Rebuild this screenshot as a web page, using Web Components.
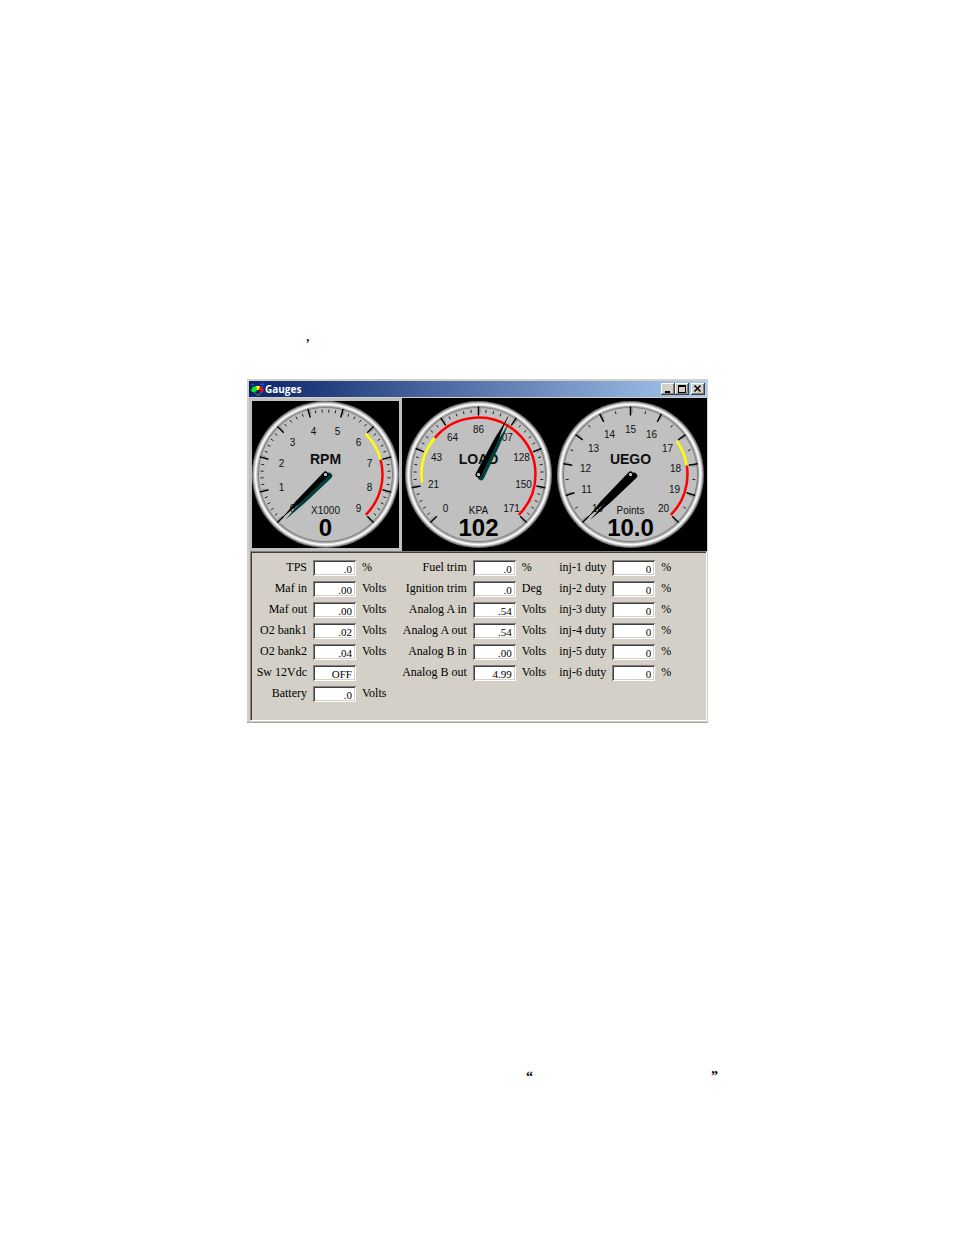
<!DOCTYPE html>
<html lang="en">
<head>
<meta charset="utf-8">
<title>Gauges</title>
<style>
  body { margin: 0; background: #fff; color: #000; font-family: "Liberation Serif", "Times New Roman", serif; }
</style>
</head>
<body>
<manual-page>
  <span slot="before">’</span>
  <app-window caption="Gauges">
    <gauge-strip slot="gauges">
      <dial-gauge framed caption="RPM" unit="X1000" value="0" labels="0,1,2,3,4,5,6,7,8,9" minors="4" yellow="45,75" red="75,135" needle="-135" shade="#004040"></dial-gauge>
      <dial-gauge caption="LOAD" unit="KPA" value="102" labels="0,21,43,64,86,107,128,150,171" minors="4" yellow="-98,-50" red="-50,135" needle="27" shade="#004040"></dial-gauge>
      <dial-gauge caption="UEGO" unit="Points" value="10.0" labels="10,11,12,13,14,15,16,17,18,19,20" minors="1" yellow="54,81" red="81,135" needle="-135" shade="#000"></dial-gauge>
    </gauge-strip>
    <readout-panel>
      <readout-group>
        <readout-field label="TPS" value=".0" unit="%"></readout-field>
        <readout-field label="Maf in" value=".00" unit="Volts"></readout-field>
        <readout-field label="Maf out" value=".00" unit="Volts"></readout-field>
        <readout-field label="O2 bank1" value=".02" unit="Volts"></readout-field>
        <readout-field label="O2 bank2" value=".04" unit="Volts"></readout-field>
        <readout-field label="Sw 12Vdc" value="OFF" unit=""></readout-field>
        <readout-field label="Battery" value=".0" unit="Volts"></readout-field>
      </readout-group>
      <readout-group>
        <readout-field label="Fuel trim" value=".0" unit="%"></readout-field>
        <readout-field label="Ignition trim" value=".0" unit="Deg"></readout-field>
        <readout-field label="Analog A in" value=".54" unit="Volts"></readout-field>
        <readout-field label="Analog A out" value=".54" unit="Volts"></readout-field>
        <readout-field label="Analog B in" value=".00" unit="Volts"></readout-field>
        <readout-field label="Analog B out" value="4.99" unit="Volts"></readout-field>
      </readout-group>
      <readout-group>
        <readout-field label="inj-1 duty" value="0" unit="%"></readout-field>
        <readout-field label="inj-2 duty" value="0" unit="%"></readout-field>
        <readout-field label="inj-3 duty" value="0" unit="%"></readout-field>
        <readout-field label="inj-4 duty" value="0" unit="%"></readout-field>
        <readout-field label="inj-5 duty" value="0" unit="%"></readout-field>
        <readout-field label="inj-6 duty" value="0" unit="%"></readout-field>
      </readout-group>
    </readout-panel>
  </app-window>
  <span slot="open">“</span>
  <span slot="close">”</span>
</manual-page>

<script>
class Base extends HTMLElement {
  constructor() {
    super();
    this.attachShadow({ mode: 'open' });
  }
  connectedCallback() { this.shadowRoot.innerHTML = this.render(); }
  attr(name) { return this.getAttribute(name) || ''; }
}

customElements.define('manual-page', class extends Base {
  render() {
    return `<style>
      :host { display: block; padding: 336px 0 150px 1px; }
      main { max-width: 461px; margin: 0 auto; }
      p { margin: 0; }
      .before { padding-left: 58px; font-size: 16px; line-height: 18px; margin-bottom: 25px; }
      .after { display: flex; justify-content: space-between; margin: 346px -10px 0 279px;
        font-size: 14px; line-height: 16px; font-weight: bold; }
    </style>
    <main>
      <p class="before"><slot name="before"></slot></p>
      <slot></slot>
      <p class="after"><slot name="open"></slot><slot name="close"></slot></p>
    </main>`;
  }
});

customElements.define('app-window', class extends Base {
  render() {
    return `<style>
      :host { display: block; background: #d4d0c8; padding: 2px 1px 1px 2px; border-bottom: 1px solid #a8a49c; }
      header { display: flex; align-items: center; height: 16px; padding: 0 2px 0 2px; margin-bottom: 1px;
        background: linear-gradient(90deg, #0a246a, #a6caf0); color: #fff; }
      header svg.logo { width: 14px; height: 14px; flex: none; }
      h1 { flex: 1; margin: 0; font: bold 10px/16px "Open Sans", "Noto Sans", sans-serif; }
      button { width: 14px; height: 12px; padding: 0; border: 0; background: #d4d0c8; display: grid; place-items: center;
        box-shadow: inset -1px -1px #404040, inset 1px 1px #fff, inset -2px -2px #808080; }
      button:last-child { margin-left: 2px; }
      button svg { width: 14px; height: 12px; display: block; }
    </style>
    <header>
      <svg class="logo" viewBox="0 0 14 14">
        <path d="M0 8l2-3 3-1 1 4-2 2H1z" fill="#00f020"/>
        <path d="M5 4h4v3L7 8H6z" fill="#ff0"/>
        <path d="M9 4l3 2 1 2-1 2h-2L8 7z" fill="#f01010"/>
        <path d="M3 10l3 3h2l3-3" fill="none" stroke="#807060"/>
        <path d="M0 2.500h3M9 2.500h4M11.500 0v5" stroke="#0058f8"/>
      </svg>
      <h1>${this.attr('caption')}</h1>
      <button aria-label="Minimize"><svg viewBox="0 0 14 12" shape-rendering="crispEdges"><path d="M4 8h5v2H4z"/></svg></button>
      <button aria-label="Maximize"><svg viewBox="0 0 14 12" shape-rendering="crispEdges"><path d="M3 2h8v8H3zM4 4v5h6V4z" fill-rule="evenodd"/></svg></button>
      <button aria-label="Close"><svg viewBox="0 0 14 12"><path d="M3.500 2.500l6 6M9.500 2.500l-6 6" stroke="#000" stroke-width="1.500"/></svg></button>
    </header>
    <slot name="gauges"></slot>
    <slot></slot>`;
  }
});

customElements.define('gauge-strip', class extends Base {
  render() {
    return `<style>
      :host { display: grid; grid-template-columns: repeat(3, 1fr); background: #000; }
    </style><slot></slot>`;
  }
});

customElements.define('dial-gauge', class extends Base {
  point(angle, r) {
    const a = angle * Math.PI / 180;
    return (r * Math.sin(a)).toFixed(2) + ' ' + (-r * Math.cos(a)).toFixed(2);
  }
  arc(range, color) {
    const [a, b] = range.split(',').map(Number);
    return `<path d="M${this.point(a, 57)}A57 57 0 ${b - a > 180 ? 1 : 0} 1 ${this.point(b, 57)}" fill="none" stroke="${color}" stroke-width="2.500"/>`;
  }
  render() {
    const labels = this.attr('labels').split(',');
    const minors = Number(this.attr('minors'));
    const step = 270 / (labels.length - 1);
    let major = '', minor = '', shadow = '', texts = '';
    labels.forEach((text, i) => {
      const a = -135 + i * step;
      major += `M${this.point(a, 59)}L${this.point(a, 68)}`;
      shadow += `M${this.point(a + 1.5, 62)}L${this.point(a + 1.5, 68)}`;
      const [x, y] = this.point(a, 46).split(' ').map(Number);
      texts += `<text x="${Math.round(x)}" y="${Math.round(y) + 4}">${text}</text>`;
      if (i < labels.length - 1) {
        for (let k = 1; k <= minors; k++) {
          const m = a + step * k / (minors + 1);
          minor += `M${this.point(m, 62)}L${this.point(m, 65)}`;
        }
      }
    });
    const ring = [[73.5, '#707070'], [72.5, '#a8a8a8'], [71.5, '#e0e0e0'], [70.5, '#ffffff'], [69.5, '#d8d8d8'], [68.5, '#a4a4a4'], [67.5, '#808080']]
      .map(([r, c]) => `<circle r="${r}" fill="${c}"/>`).join('');
    return `<style>
      :host { display: flex; justify-content: center; align-items: center; height: 153px; box-sizing: border-box; background: #000; }
      :host([framed]) { border: 3px solid #c0c0c0; }
      svg { width: 149px; height: 149px; flex: none; margin: -1px; overflow: visible; }
      text { font-family: "Liberation Sans", Arial, sans-serif; font-size: 10px; text-anchor: middle; fill: #101010; }
      .caption { font-size: 14px; font-weight: bold; }
      .value { font-size: 24px; font-weight: bold; fill: #000; }
    </style>
    <svg viewBox="-74.500 -74.500 149 149" role="img" aria-label="${this.attr('caption')} gauge">
      ${ring}<circle r="66.500" fill="#c0c0c0"/>
      <path d="${shadow}" stroke="#909090"/>
      <path d="${major}" stroke="#000" stroke-width="1.500"/>
      <path d="${minor}" stroke="#222"/>
      ${texts}
      ${this.arc(this.attr('yellow'), '#ff0')}
      ${this.arc(this.attr('red'), '#f00')}
      <text class="caption" y="-11">${this.attr('caption')}</text>
      <text y="39">${this.attr('unit')}</text>
      <text class="value" y="61">${this.attr('value')}</text>
      <g transform="translate(3 2) rotate(${this.attr('needle')})"><path d="M-3 1L-2-35L0-61L2-35L3 1A3 3 0 0 1-3 1" fill="${this.attr('shade')}"/></g>
      <g transform="rotate(${this.attr('needle')})"><path d="M-3 0L-2-40L0-60L2-40L3 0A3 3 0 0 1-3 0" fill="#000"/></g>
      <path d="M0 0L${this.point(Number(this.attr('needle')), this.hasAttribute('framed') ? 66 : 62)}" stroke="#000"/>
      <circle r="1.500" fill="#fff"/><circle r=".6" fill="#555"/>
    </svg>`;
  }
});

customElements.define('readout-panel', class extends Base {
  render() {
    return `<style>
      :host { display: grid; grid-template-columns: 151fr 145fr 161fr; min-height: 170px; box-sizing: border-box; margin-left: 1px;
        padding: 8px 0 7px 0; border: 1px solid; border-color: #808080 #fff #fff #808080;
        box-shadow: inset 1px 1px #404040; }
    </style><slot></slot>`;
  }
});

customElements.define('readout-group', class extends Base {
  render() {
    return `<style>
      :host { display: flex; flex-direction: column; gap: 5px; }
      :host(:first-child) { --label: 56px; }
      :host(:nth-child(2)) { --label: 66px; }
      :host(:last-child) { --label: 60px; }
    </style><slot></slot>`;
  }
});

customElements.define('readout-field', class extends Base {
  render() {
    return `<style>
      :host { display: grid; grid-template-columns: var(--label) 43px auto; column-gap: 6px; align-items: start; height: 16px;
        font-size: 12px; line-height: 14px; white-space: nowrap; }
      label { text-align: right; }
      input { box-sizing: border-box; width: 43px; height: 16px; margin: 0; border: 0; border-radius: 0; padding: 2px 4px 0 3px;
        background: #fff; color: #000; text-align: right; font: 11px/14px "Liberation Serif", "Times New Roman", serif;
        box-shadow: inset 1px 1px #808080, inset -1px -1px #fff, inset 2px 2px #404040, inset -2px -2px #d4d0c8; }
    </style>
    <label for="v">${this.attr('label')}</label><input id="v" value="${this.attr('value')}" readonly><span>${this.attr('unit')}</span>`;
  }
});
</script>
</body>
</html>
